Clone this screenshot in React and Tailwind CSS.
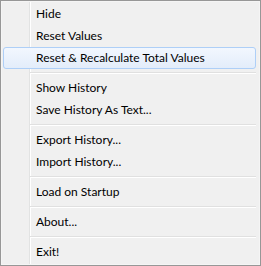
import React from 'react';

const menu = [
    { label: 'Hide' },
    { label: 'Reset Values' },
    { label: 'Reset & Recalculate Total Values', active: true },
    { sep: true },
    { label: 'Show History' },
    { label: 'Save History As Text...' },
    { sep: true },
    { label: 'Export History...' },
    { label: 'Import History...' },
    { sep: true },
    { label: 'Load on Startup' },
    { sep: true },
    { label: 'About...' },
    { sep: true },
    { label: 'Exit!' },
];

const MenuItem = ({ label, active }) => (
    <div
        className={
            active
                ? 'h-[22px] flex items-center pl-[32px] rounded-[3px] border border-[#aecff7] bg-gradient-to-b from-[#f2f7fe] to-[#e3edfa]'
                : 'h-[22px] flex items-center pl-[32px] border border-transparent'
        }
    >
        <span className="text-[12px] text-black leading-none">{label}</span>
    </div>
);

const Separator = () => (
    <div className="h-[8px] flex items-center pl-[27px]">
        <div className="w-full border-t border-t-[#e0e0e0] border-b border-b-white" />
    </div>
);

const App = () => {
    return (
        <div className="w-[261px] h-[266px] bg-white font-['Lato','Noto_Sans',sans-serif]">
            <div className="w-[261px] h-[266px] border border-[#979797] pt-[2px] pb-[3px] pl-[2px] pr-[4px] shadow-[inset_1px_1px_0_#f5f5f5,inset_-1px_-1px_0_#f5f5f5] bg-[linear-gradient(to_right,#f0f0f0_28px,#e2e3e3_28px,#e2e3e3_29px,#ffffff_29px,#ffffff_30px,#f0f0f0_30px)]">
                {menu.map((m, i) =>
                    m.sep ? <Separator key={i} /> : <MenuItem key={i} label={m.label} active={m.active} />
                )}
            </div>
        </div>
    );
};

export default App;
